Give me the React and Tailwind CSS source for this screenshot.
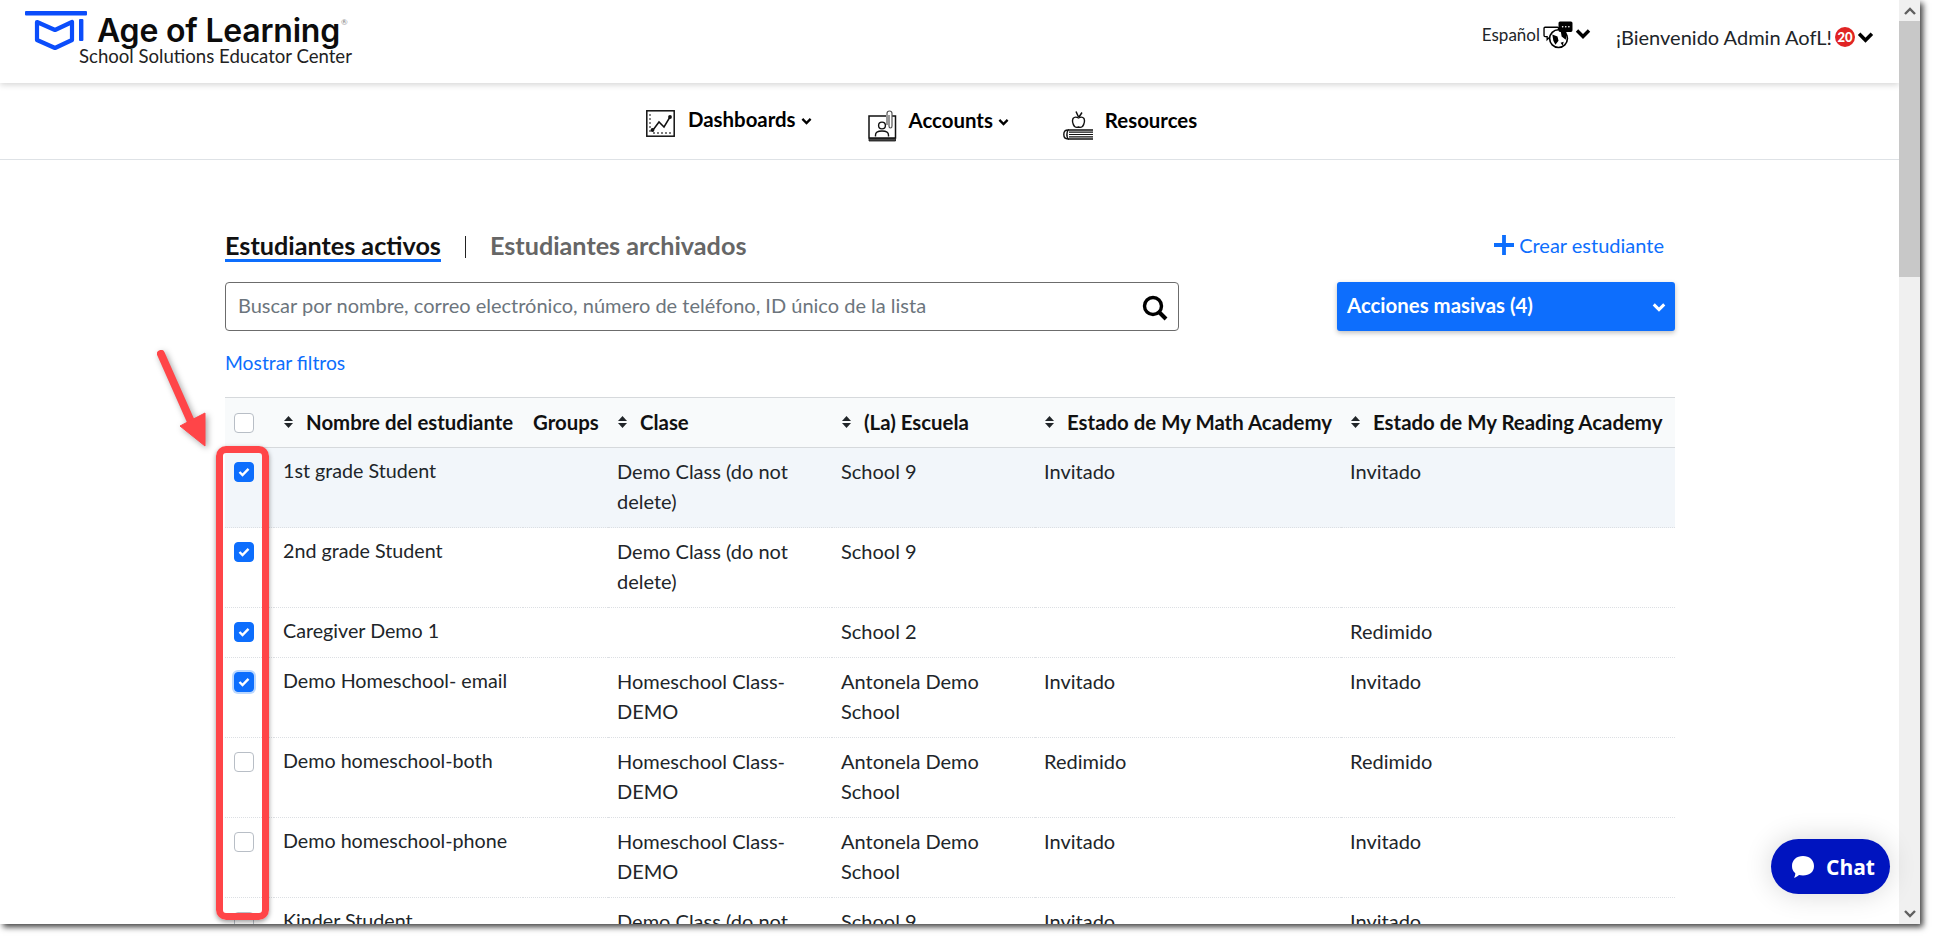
import React from 'react';

const font = { fontFamily: 'Lato, "Liberation Sans", sans-serif' };

const students = [
  { name: '1st grade Student', clase: 'Demo Class (do not delete)', school: 'School 9', math: 'Invitado', reading: 'Invitado', checked: true, active: true },
  { name: '2nd grade Student', clase: 'Demo Class (do not delete)', school: 'School 9', math: '', reading: '', checked: true },
  { name: 'Caregiver Demo 1', clase: '', school: 'School 2', math: '', reading: 'Redimido', checked: true },
  { name: 'Demo Homeschool- email', clase: 'Homeschool Class-DEMO', school: 'Antonela Demo School', math: 'Invitado', reading: 'Invitado', checked: true, focus: true },
  { name: 'Demo homeschool-both', clase: 'Homeschool Class-DEMO', school: 'Antonela Demo School', math: 'Redimido', reading: 'Redimido' },
  { name: 'Demo homeschool-phone', clase: 'Homeschool Class-DEMO', school: 'Antonela Demo School', math: 'Invitado', reading: 'Invitado' },
  { name: 'Kinder Student', clase: 'Demo Class (do not delete)', school: 'School 9', math: 'Invitado', reading: 'Invitado' },
];

// small filled chevron used in the header and nav
const Chevron = ({ className, color = '#000' }) => (
  <svg className={className} viewBox="0 0 16 11" fill="none">
    <path d="M2 2.5 L8 8.5 L14 2.5" stroke={color} strokeWidth="3.4" />
  </svg>
);

const SortIcon = () => (
  <svg className="w-[9px] h-[12px] shrink-0" viewBox="0 0 9 12" fill="#212529">
    <path d="M4.5 0 L9 5 H0 Z" />
    <path d="M4.5 12 L0 7 H9 Z" />
  </svg>
);

const Logo = () => (
  <svg className="w-[62px] h-[40px] shrink-0" viewBox="0 0 62 40" fill="none">
    <rect x="0" y="0" width="62" height="4.6" rx="1" fill="#0b4dfb" />
    <path d="M12 11 L30 19 L47 11 V29 L30 37 L12 29 Z" stroke="#0b4dfb" strokeWidth="4.2" strokeLinejoin="round" />
    <rect x="54" y="8" width="4.4" height="22" rx="1" fill="#0b4dfb" />
  </svg>
);

const GlobeIcon = () => (
  <svg className="w-[30px] h-[28px] shrink-0" viewBox="0 0 29 27" fill="none">
    <path d="M2 6 H14 Q15 6 15 7 V14 Q15 15 14 15 H7 L4 18 V15 H2 Q1 15 1 14 V7 Q1 6 2 6 Z" stroke="#000" strokeWidth="1.3" fill="#fff" />
    <circle cx="15" cy="17" r="8.6" stroke="#000" strokeWidth="1.6" fill="#fff" />
    <path d="M9 13 L14 15 L15 19 L12 23 L10 19 Z M17 9 L23 12 L22 18 L18 15 Z M17 21 L20 20 L19 24 Z" fill="#000" />
    <path d="M15 2 Q15 0.5 16.5 0.5 H27 Q28.5 0.5 28.5 2 V9 Q28.5 10.5 27 10.5 H23 L21 13 V10.5 H16.5 Q15 10.5 15 9 Z" fill="#000" />
    <circle cx="19" cy="5.5" r="0.8" fill="#fff" />
    <circle cx="22" cy="5.5" r="0.8" fill="#fff" />
    <circle cx="25" cy="5.5" r="0.8" fill="#fff" />
  </svg>
);

const ChartIcon = () => (
  <svg className="w-[29px] h-[27px] shrink-0" viewBox="0 0 29 27" fill="none">
    <rect x="0.8" y="0.8" width="27.4" height="25.4" stroke="#111" strokeWidth="1.5" />
    <path d="M7 20 L13 12 L18 17 L24 7" stroke="#111" strokeWidth="1.5" />
    <circle cx="6.5" cy="20" r="1.9" fill="#111" />
    <circle cx="24" cy="7" r="1.9" fill="#111" />
    <path d="M3 5 H5 M3 9 H5 M3 13 H5 M3 17 H5 M3 21 H5 M8 24 V22 M12 24 V22 M16 24 V22 M20 24 V22 M24 24 V22" stroke="#111" strokeWidth="1.1" />
  </svg>
);

const AccountIcon = () => (
  <svg className="w-[29px] h-[32px] shrink-0" viewBox="0 0 29 32" fill="none">
    <path d="M18 6 H1 V28 H27.5 V6 H24" stroke="#111" strokeWidth="1.5" />
    <path d="M1 28.5 H27.5 V31 H1 Z" fill="#444" stroke="#111" strokeWidth="0.8" />
    <path d="M19 15 V3.5 Q19 1 21.5 1 Q24 1 24 3.5 V16 Q24 18 22.500 18 Q21 18 21 16 V5" stroke="#555" strokeWidth="1.2" />
    <circle cx="14" cy="15.5" r="3.4" stroke="#111" strokeWidth="1.4" />
    <path d="M7.500 26.500 V25 Q7.500 21 14 21 Q20.500 21 20.500 25 V26.500" stroke="#111" strokeWidth="1.4" />
  </svg>
);

const BookIcon = () => (
  <svg className="w-[30px] h-[29px] shrink-0" viewBox="0 0 30 29" fill="none">
    <path d="M15.5 7 Q19 5 21 7.500 Q22.500 11 19.500 15.500 Q17.500 17 15.500 16 Q13.500 17 11.500 15.500 Q8.500 11 10 7.500 Q12 5 15.500 7 Z" stroke="#111" strokeWidth="1.4" />
    <path d="M15.500 6 L13 0.500 M16 6 L19 1.500" stroke="#111" strokeWidth="1.5" />
    <path d="M5 19 H30 M5 28 H30" stroke="#111" strokeWidth="1.6" />
    <path d="M5 19 Q0.800 19 0.800 23.500 Q0.800 28 5 28 Q2.800 23.500 5 19 Z" stroke="#111" strokeWidth="1.4" />
    <path d="M6 21.200 H30 M6 23.500 H30 M6 25.800 H30" stroke="#111" strokeWidth="1.2" />
  </svg>
);

const Checkbox = ({ checked, focus }) => (
  <span
    className={`flex w-[20px] h-[20px] items-center justify-center rounded-[4px] border ${
      checked ? 'bg-[#0d6efd] border-[#0d6efd]' : 'bg-white border-[#b8bec6]'
    } ${focus ? 'ring-2 ring-[#bcd8fe]' : ''}`}
  >
    {checked && (
      <svg className="w-[12px] h-[10px]" viewBox="0 0 12 10" fill="none">
        <path d="M1.500 5 L4.500 8 L10.500 1.800" stroke="#fff" strokeWidth="2.400" />
      </svg>
    )}
  </span>
);

const HeaderCell = ({ children, sort = true }) => (
  <th className="pl-[10px] pr-0 pb-[2px] align-middle text-left text-[20.4px] font-bold whitespace-nowrap">
    <span className="flex items-center gap-[13px]">
      {sort && <SortIcon />}
      {children}
    </span>
  </th>
);

// row of the students table
const StudentRow = ({ student }) => (
  <tr className={`border-b border-dotted border-[#dcdfe3] ${student.active ? 'bg-[#f2f6fa]' : ''}`}>
    <td className="pl-[9px] pt-[14px] pb-[10px] align-top">
      <Checkbox checked={student.checked} focus={student.focus} />
    </td>
    <td className="pl-[9px] pt-[8px] pb-[11px] align-top text-[19.7px]">{student.name}</td>
    <td></td>
    <td className="pl-[9px] pr-[30px] pt-[8px] pb-[11px] align-top">{student.clase}</td>
    <td className="pl-[9px] pr-[30px] pt-[8px] pb-[11px] align-top">{student.school}</td>
    <td className="pl-[9px] pt-[8px] pb-[11px] align-top">{student.math}</td>
    <td className="pl-[9px] pt-[8px] pb-[11px] align-top">{student.reading}</td>
  </tr>
);

export default function App() {
  return (
    <div className="w-[1935px] h-[939px] bg-white overflow-hidden" style={font}>
      <div className="relative flex w-[1920px] h-[924px] overflow-hidden bg-white shadow-[3px_3px_6px_rgba(0,0,0,0.75)]">
        <div className="w-[1899px] h-full overflow-hidden text-[#212529]">
          {/* top header */}
          <header className="relative z-10 flex h-[83px] justify-between bg-white pl-[25px] pr-[25px] shadow-[0_2px_6px_rgba(0,0,0,0.16)]">
            <div className="pt-[11px]">
              <div className="flex">
                <Logo />
                <span className="ml-[10px] mt-[2px] text-[32px] leading-[36px] font-semibold text-[#0c0c0c] tracking-[-0.2px]" style={{ fontFamily: 'Inter, sans-serif' }}>
                  Age of Learning
                </span>
                <span className="mt-[6px] ml-[1px] text-[8px] leading-[10px] text-[#888]">®</span>
              </div>
              <div className="ml-[54px] -mt-[4px] text-[18.6px] leading-[18px] text-[#222] whitespace-nowrap">
                School Solutions Educator Center
              </div>
            </div>
            <div className="flex items-start">
              <div className="flex items-center mt-[21px] text-[17px] leading-[26px]">
                <span>Español</span>
                <span className="ml-[3px]"><GlobeIcon /></span>
                <Chevron className="w-[16px] h-[11px] ml-[2px] -mt-[3px]" />
              </div>
              <div className="flex items-center ml-[25px] mt-[23px] text-[20px] leading-[28px]">
                <span>¡Bienvenido Admin AofL!</span>
                <span className="flex w-[20px] h-[20px] ml-[3px] items-center justify-center rounded-full bg-[#e02424] text-[13px] font-black text-white">20</span>
                <Chevron className="w-[17px] h-[12px] ml-[2px]" />
              </div>
            </div>
          </header>

          {/* main nav */}
          <nav className="flex h-[77px] items-start border-b border-[#dee2e6] pl-[646px] text-[20.4px] font-bold text-black">
            <div className="flex items-start pt-[27px]">
              <ChartIcon />
              <span className="ml-[13px] -mt-[4px] leading-[26px]">Dashboards</span>
              <Chevron className="w-[11px] h-[8px] ml-[5px] mt-[7px]" />
            </div>
            <div className="flex items-start pt-[27px] ml-[56px]">
              <AccountIcon />
              <span className="ml-[12px] leading-[26px] -mt-[3px]">Accounts</span>
              <Chevron className="w-[11px] h-[8px] ml-[5px] mt-[8px]" />
            </div>
            <div className="flex items-start pt-[28px] ml-[54px]">
              <BookIcon />
              <span className="ml-[12px] leading-[26px] -mt-[4px]">Resources</span>
            </div>
          </nav>

          {/* students list */}
          <main className="pl-[225px] pr-[224px] pt-[70px] text-[20px] leading-[30px]">
            <div className="flex items-start justify-between">
              <div className="flex items-start text-[25.2px] font-bold">
                <span className="h-[32px] leading-[30px] border-b-[3px] border-[#0d6efd] text-[#111]">Estudiantes activos</span>
                <span className="ml-[24px] mt-[6px] h-[22px] w-px bg-[#222]"></span>
                <span className="ml-[24px] leading-[30px] text-[#666]">Estudiantes archivados</span>
              </div>
              <a className="flex items-center pr-[11px] text-[20px] leading-[30px] text-[#0d6efd]">
                <svg className="w-[20px] h-[20px] mr-[5px]" viewBox="0 0 21 21" fill="#0d6efd">
                  <path d="M8.500 0 H12.500 V8.500 H21 V12.500 H12.500 V21 H8.500 V12.500 H0 V8.500 H8.500 Z" />
                </svg>
                Crear estudiante
              </a>
            </div>

            <div className="flex mt-[20px] justify-between">
              <div className="flex h-[49px] w-[954px] items-center justify-between rounded-[4px] border border-[#6c6c6c] pl-[12px] pr-[10px]">
                <span className="-mt-[3px] text-[#6c757d]">Buscar por nombre, correo electrónico, número de teléfono, ID único de la lista</span>
                <svg className="w-[26px] h-[26px] mt-[3px]" viewBox="0 0 26 26" fill="none">
                  <circle cx="11" cy="11" r="8.500" stroke="#000" strokeWidth="3.400" />
                  <path d="M17.500 17.500 L24 24" stroke="#000" strokeWidth="4" />
                </svg>
              </div>
              <button className="flex h-[49px] w-[338px] items-center justify-between rounded-[3px] bg-[#0d6efd] pl-[10px] pr-[9px] text-[20.4px] font-bold text-white shadow-[0_2px_5px_rgba(0,0,0,0.25)]">
                <span className="-mt-[3px]">Acciones masivas (4)</span>
                <Chevron className="w-[14px] h-[10px]" color="#fff" />
              </button>
            </div>

            <div className="mt-[17px] text-[19.3px]">
              <a className="text-[#0d6efd]">Mostrar filtros</a>
            </div>

            <table className="mt-[19px] w-[1450px] table-fixed border-collapse">
              <colgroup>
                <col className="w-[49px]" />
                <col className="w-[249px]" />
                <col className="w-[85px]" />
                <col className="w-[224px]" />
                <col className="w-[203px]" />
                <col className="w-[306px]" />
                <col className="w-[334px]" />
              </colgroup>
              <thead>
                <tr className="h-[50px] border-y border-[#d6d9dc] bg-[#f8fafb] text-[#111]">
                  <th className="pl-[9px] align-middle"><Checkbox /></th>
                  <HeaderCell>Nombre del estudiante</HeaderCell>
                  <HeaderCell sort={false}>Groups</HeaderCell>
                  <HeaderCell>Clase</HeaderCell>
                  <HeaderCell>(La) Escuela</HeaderCell>
                  <HeaderCell>Estado de My Math Academy</HeaderCell>
                  <HeaderCell>Estado de My Reading Academy</HeaderCell>
                </tr>
              </thead>
              <tbody>
                {students.map((s) => (
                  <StudentRow key={s.name} student={s} />
                ))}
              </tbody>
            </table>
          </main>
        </div>

        {/* browser scrollbar */}
        <div className="flex w-[21px] h-full flex-col bg-[#f0f0f0]">
          <div className="flex h-[21px] items-center justify-center">
            <svg className="w-[12px] h-[8px]" viewBox="0 0 12 8" fill="none"><path d="M1 7 L6 2 L11 7" stroke="#606060" strokeWidth="2.400" /></svg>
          </div>
          <div className="h-[256px] bg-[#c8c8c8]"></div>
          <div className="flex-1"></div>
          <div className="flex h-[21px] items-center justify-center">
            <svg className="w-[12px] h-[8px]" viewBox="0 0 12 8" fill="none"><path d="M1 1 L6 6 L11 1" stroke="#606060" strokeWidth="2.400" /></svg>
          </div>
        </div>

        {/* chat widget */}
        <button className="absolute left-[1771px] top-[839px] flex h-[55px] w-[119px] items-center rounded-full bg-[#0014bf] pl-[20px] text-[21px] font-bold text-white shadow-[0_0_28px_rgba(0,0,0,0.16)]" style={{ fontFamily: '"Open Sans", sans-serif' }}>
          <svg className="w-[24px] h-[24px] mr-[11px]" viewBox="0 0 24 24" fill="#fff">
            <path d="M12 1 C18.500 1 23 5 23 11 C23 17 18.500 20.500 12 20.500 C10.500 20.500 9 20.300 8 20 C6.500 21.500 4.500 22.500 3 22.800 C3.800 21.500 4.300 20 4.300 18.200 C2 16.500 1 14 1 11 C1 5 5.500 1 12 1 Z" />
          </svg>
          <span className="mt-[2px]">Chat</span>
        </button>

        {/* red annotation over the checkboxes */}
        <div className="absolute left-[216px] top-[446px] h-[474px] w-[53px] rounded-[10px] border-[7px] border-[#ff4548] shadow-[0_2px_5px_rgba(0,0,0,0.4)]"></div>
        <svg className="absolute left-[150px] top-[340px] h-[115px] w-[65px] drop-shadow-[2px_2px_3px_rgba(0,0,0,0.35)]" viewBox="0 0 65 115" fill="none">
          <path d="M11 14 L42 84" stroke="#ff4548" strokeWidth="8" strokeLinecap="round" />
          <path d="M55 106 L30 86 L55 73 Z" stroke="#ff4548" strokeWidth="1" fill="#ff4548" />
        </svg>
      </div>
    </div>
  );
}
